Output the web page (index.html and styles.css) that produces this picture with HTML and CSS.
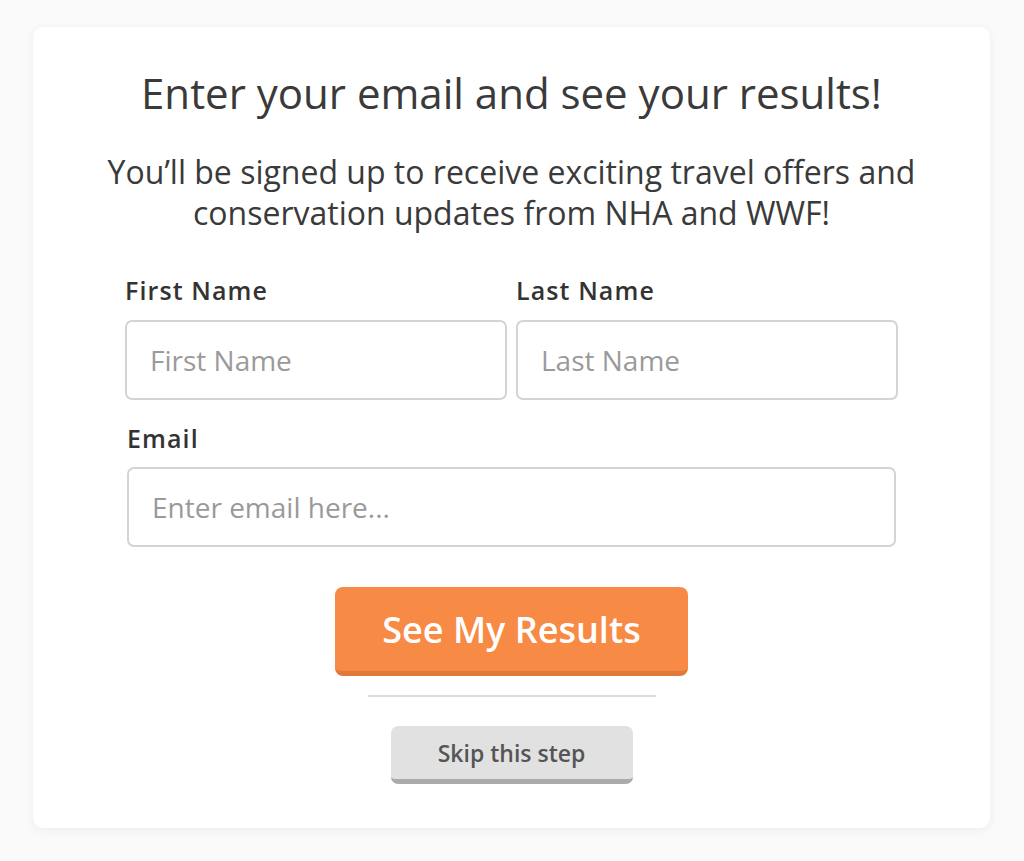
FILE: index.html
```html
<!DOCTYPE html>
<html>
<head>
  <title>See your results</title>
  <link rel="stylesheet" href="styles.css">
</head>
<body>
  <div class="card">
    <h1>Enter your email and see your results!</h1>
    <p class="intro">You’ll be signed up to receive exciting travel offers and conservation updates from NHA and WWF!</p>

    <form id="signup-form">
      <div class="row">
        <div class="field">
          <label for="first-name">First Name</label>
          <input type="text" id="first-name" placeholder="First Name">
        </div>
        <div class="field">
          <label for="last-name">Last Name</label>
          <input type="text" id="last-name" placeholder="Last Name">
        </div>
      </div>
      <div class="field email">
        <label for="email">Email</label>
        <input type="email" id="email" placeholder="Enter email here...">
      </div>

      <button type="submit" class="btn-results">See My Results</button>
    </form>

    <hr class="divider">

    <button type="button" class="btn-skip">Skip this step</button>
  </div>
</body>
</html>
```

FILE: styles.css
```css
body {
  margin: 0;
  padding: 27px 34px 33px 33px;
  background-color: #fafafa;
  font-family: "Open Sans", Arial, sans-serif;
  color: #3a3a3a;
}

.card {
  background-color: #ffffff;
  border-radius: 10px;
  box-shadow: 0 2px 10px rgba(0, 0, 0, 0.06);
  height: 801px;
  box-sizing: border-box;
  padding-top: 38px;
  display: flex;
  flex-direction: column;
  align-items: center;
}

h1 {
  margin: 0;
  font-size: 42px;
  font-weight: 400;
  line-height: 56px;
  color: #3a3a3a;
}

.intro {
  margin: 30px 0 0;
  width: 860px;
  text-align: center;
  font-size: 32px;
  line-height: 41px;
  color: #3a3a3a;
}

form {
  width: 773px;
  margin-top: 41px;
  display: flex;
  flex-direction: column;
  align-items: center;
}

.row {
  display: flex;
  gap: 9px;
  width: 100%;
}

.field {
  flex: 1;
  min-width: 0;
  display: flex;
  flex-direction: column;
}

.field.email {
  width: 100%;
  box-sizing: border-box;
  padding: 0 2px;
  margin-top: 22px;
}

label {
  font-size: 25px;
  font-weight: 600;
  letter-spacing: 1.1px;
  line-height: 32px;
  color: #333333;
  margin-bottom: 14px;
}

.field.email label {
  margin-bottom: 13px;
}

input {
  width: 100%;
  height: 80px;
  box-sizing: border-box;
  padding: 0 23px;
  border: 2px solid #d4d4d4;
  border-radius: 7px;
  font-family: inherit;
  font-size: 28px;
  color: #333333;
}

input::placeholder {
  color: #9a9a9a;
}

.btn-results {
  margin-top: 40px;
  width: 353px;
  height: 89px;
  background-color: #f78a45;
  border: none;
  border-bottom: 5px solid #e07a3a;
  border-radius: 8px;
  color: #ffffff;
  font-family: inherit;
  font-size: 36px;
  font-weight: 600;
  cursor: pointer;
}

.divider {
  width: 288px;
  margin: 19px 0 0;
  border: none;
  border-top: 2px solid #dddddd;
}

.btn-skip {
  margin-top: 29px;
  width: 242px;
  height: 58px;
  background-color: #e1e1e1;
  border: none;
  border-bottom: 5px solid #ababab;
  border-radius: 7px;
  color: #555555;
  font-family: inherit;
  font-size: 23px;
  font-weight: 600;
  cursor: pointer;
}
```
